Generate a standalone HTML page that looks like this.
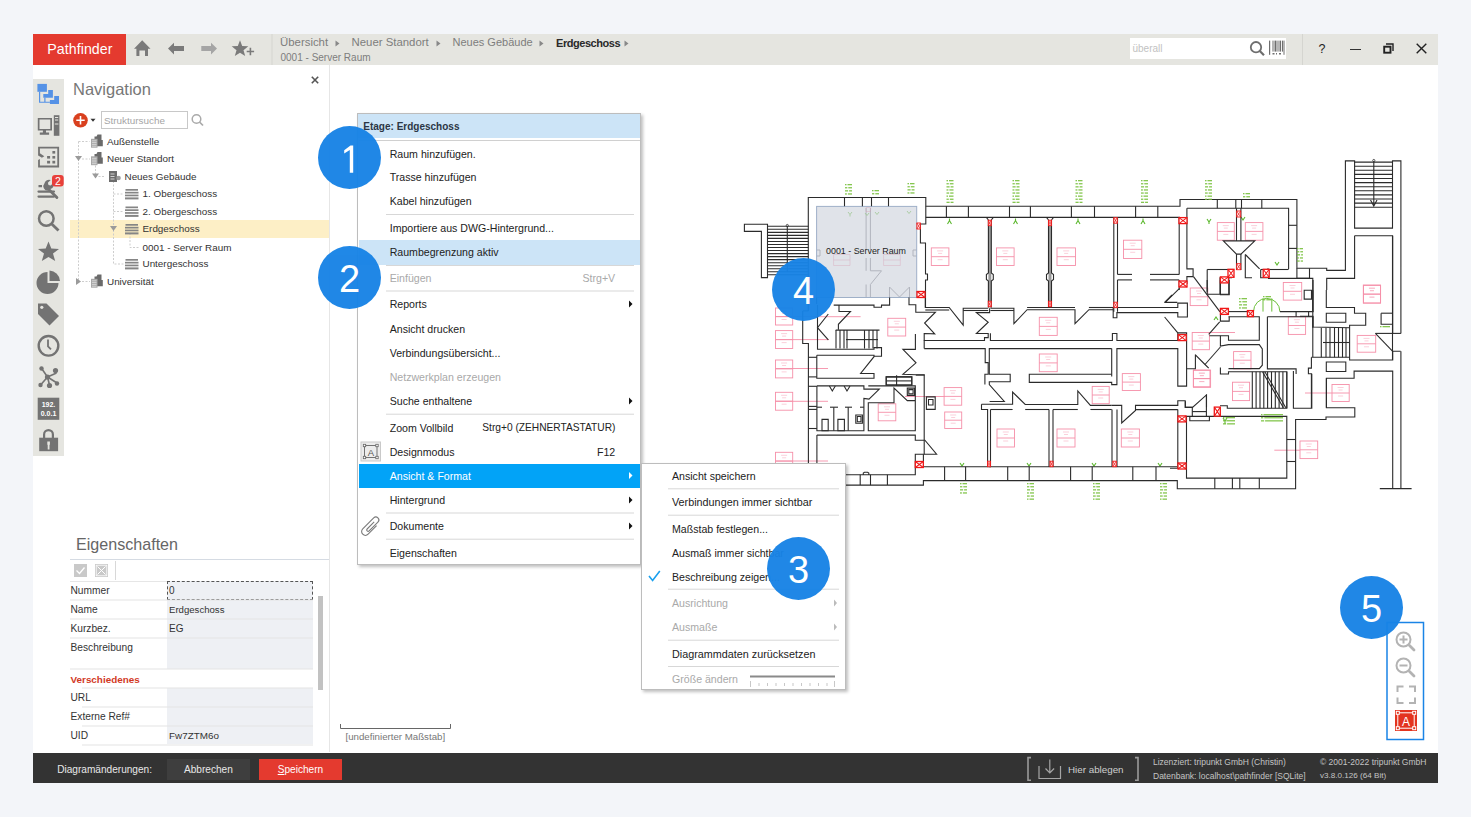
<!DOCTYPE html>
<html><head><meta charset="utf-8">
<style>
*{margin:0;padding:0;box-sizing:border-box}
html,body{width:1471px;height:817px;overflow:hidden;background:#f3f5f9;font-family:"Liberation Sans",sans-serif;color:#222}
.a{position:absolute}
.t{position:absolute;white-space:nowrap;line-height:1}
#app{position:absolute;left:33px;top:34px;width:1405px;height:749px;background:#fff}
#hdr{position:absolute;left:33px;top:34px;width:1405px;height:31px;background:#e5e5e0}
#logo{position:absolute;left:33px;top:34px;width:93px;height:31px;background:#e43a2f;color:#fff;font-size:14.2px;line-height:31px;padding-left:14.3px;letter-spacing:0.05px}
.bc{color:#7d7d7d;font-size:12px}
.menu{position:absolute;background:#fff;border:1px solid #bdbdbd;box-shadow:2px 2px 3px rgba(0,0,0,.25)}
.mi{position:absolute;font-size:11.5px;color:#222;white-space:nowrap;line-height:1}
.dis{color:#a9a9a9}
.sep{position:absolute;height:1px;background:#d7d7d7}
.circ{position:absolute;width:63px;height:63px;border-radius:50%;background:#1783e6;opacity:.96;color:#fff;font-size:38px;line-height:67px;text-align:center}
.prow{position:absolute;left:70px;width:243px;height:19px;border-bottom:1px solid #e3e3e3}
.pl{position:absolute;left:0;top:4px;font-size:10.5px;color:#333;white-space:nowrap}
.pv{position:absolute;left:97px;top:0;width:146px;height:19px;background:#eef0f4}
.pvt{position:absolute;left:2px;top:4px;font-size:10.5px;color:#333;white-space:nowrap}
.tree{position:absolute;font-size:10.5px;color:#333;white-space:nowrap;line-height:1}
</style></head><body>
<div id="app"></div>
<div id="hdr"></div>
<div id="logo">Pathfinder</div>


<!-- header icons -->
<svg class="a" style="left:125px;top:34px" width="150" height="31" viewBox="125 34 150 31">
<g fill="#7a7a7a">
<path d="M142.2 40.3 L150.5 48.8 L148 48.8 L148 56 L145 56 L145 50.5 L139.4 50.5 L139.4 56 L136.4 56 L136.4 48.8 L134 48.8 Z"/>
<path d="M168 48.5 L174 42.7 L174 46 L184 46 L184 51 L174 51 L174 54.4 Z"/>
<path fill="#a5a5a5" d="M217 48.5 L211 42.7 L211 46 L201.3 46 L201.3 51 L211 51 L211 54.4 Z"/>
<path d="M240 40.3 L242.2 46 L248.3 46.3 L243.5 50.2 L245.2 56 L240 52.7 L234.8 56 L236.5 50.2 L231.7 46.3 L237.8 46 Z"/>
<path d="M249.6 47.8 h1.6 v2.9 h2.9 v1.6 h-2.9 v2.9 h-1.6 v-2.9 h-2.9 v-1.6 h2.9 Z"/>
</g>
<rect x="271.5" y="34" width="1" height="31" fill="#d5d5d0"/>
</svg>
<div class="t bc" style="left:280px;top:37px;font-size:11.4px">Übersicht</div>
<div class="t bc" style="left:351.5px;top:37px;font-size:11.4px">Neuer Standort</div>
<div class="t bc" style="left:452.5px;top:37px;font-size:11px">Neues Gebäude</div>
<div class="t" style="left:556px;top:37.5px;font-size:11px;font-weight:bold;color:#2a2a2a;letter-spacing:-0.45px">Erdgeschoss</div>
<svg class="a" style="left:330px;top:38px" width="310" height="12" viewBox="330 38 310 12"><g fill="#888">
<path d="M335.5 40.5 L339.5 43.5 L335.5 46.5Z"/><path d="M436.5 40.5 L440.5 43.5 L436.5 46.5Z"/><path d="M539.5 40.5 L543.5 43.5 L539.5 46.5Z"/><path d="M624.5 40.5 L628.5 43.5 L624.5 46.5Z"/></g></svg>
<div class="t bc" style="left:280.5px;top:52.5px;font-size:10px">0001 - Server Raum</div>
<!-- search -->
<div class="a" style="left:1130px;top:37.5px;width:156px;height:21.5px;background:#fff"></div>
<div class="t" style="left:1132.5px;top:44px;font-size:10px;color:#c2c2c2">überall</div>
<svg class="a" style="left:1240px;top:36px" width="60" height="26" viewBox="1240 36 60 26">
<circle cx="1256" cy="47.2" r="5.2" fill="none" stroke="#6e6e6e" stroke-width="1.8"/>
<path d="M1259.8 51 L1264 55.3" stroke="#6e6e6e" stroke-width="2.2"/>
<g fill="#6e6e6e"><rect x="1269" y="40.6" width="1.2" height="14.2"/><rect x="1272.5" y="40.6" width="1" height="11"/><rect x="1274.5" y="40.6" width="2" height="11"/><rect x="1277.5" y="40.6" width="1" height="11"/><rect x="1279.5" y="40.6" width="1.6" height="11"/><rect x="1282" y="40.6" width="1" height="11"/><rect x="1283.5" y="40.6" width="1" height="14.2"/><rect x="1272.5" y="53" width="2" height="1.5"/><rect x="1276" y="53" width="1" height="1.5"/><rect x="1279" y="53" width="2" height="1.5"/></g>
</svg>
<div class="a" style="left:1302px;top:34px;width:1px;height:31px;background:#d5d5d0"></div>
<div class="t" style="left:1318.5px;top:43px;font-size:12.5px;color:#222">?</div>
<div class="a" style="left:1350px;top:48.5px;width:11px;height:1.3px;background:#333"></div>
<svg class="a" style="left:1383px;top:43px" width="11" height="11" viewBox="0 0 11 11"><path d="M3 1h7v7" fill="none" stroke="#222" stroke-width="1.4"/><rect x="1.2" y="3.7" width="6.3" height="6" fill="none" stroke="#222" stroke-width="1.9"/></svg>
<svg class="a" style="left:1416px;top:43px" width="11" height="11" viewBox="0 0 11 11"><path d="M0.7 0.7L10.3 10.3M10.3 0.7L0.7 10.3" stroke="#222" stroke-width="1.4"/></svg>


<!-- sidebar -->
<div class="a" style="left:33px;top:79px;width:31px;height:377px;background:#e5e5e0"></div>
<svg class="a" style="left:33px;top:79px" width="31" height="377" viewBox="33 79 31 377">
<g fill="#5592e6"><rect x="37.4" y="83.9" width="9.5" height="7.9"/><path d="M48.2 89.9h4.7v7.9h-9.6v-3.8h4.9z"/><path d="M54.2 95.9h4.8v8.1h-9.1v-4h4.3z"/><path d="M39 91.8h1.2v10h9.7v1h-10.9z"/><rect x="44.3" y="97.8" width="1.2" height="4.2"/></g>
<g fill="#737373">
<path d="M37.8 117.9h14.2v12.7h-6v2h3.1v2.2h-9.3v-2.2h3.1v-2h-5.1z M39.5 119.6v9.3h10.8v-9.3z"/>
<path d="M53.8 115.2h5.6v20.6h-5.6z" /><rect x="55" y="117" width="3.2" height="1" fill="#e5e5e0"/><rect x="55" y="119.5" width="3.2" height="1" fill="#e5e5e0"/><rect x="54.8" y="123.5" width="3.6" height="1" fill="#e5e5e0"/>
<path d="M38.1 146.8h21v20.6h-21v-7.5l4-2.2-4-2.2z M39.9 148.6v4.7l4.4 2.9-4.4 2.9v6.5h17.4v-17z"/>
<rect x="52.4" y="151" width="2.8" height="2.6"/><rect x="47.1" y="156" width="3" height="2.6"/><rect x="52.4" y="156" width="2.8" height="2.6"/><rect x="47.1" y="160.8" width="3" height="2.7"/><rect x="52.4" y="160.8" width="2.8" height="2.7"/>
<path d="M38.5 190.5h15.5a1 1 0 0 1 0 2.2h-15.5a1 1 0 0 1 0-2.2z M38.5 195.5h15.5a1 1 0 0 1 0 2.2h-15.5a1 1 0 0 1 0-2.2z M38.5 185h3.5v2.2h-3.5z"/><path d="M44.5 183.2 a4.6 4.6 0 0 1 6.2 -3.2 l-2.8 2.8 0.6 2.2 2.2 0.6 2.8 -2.8 a4.6 4.6 0 0 1 -3.2 6.2 l7.6 7.6 a1.4 1.4 0 0 1 -2 2 l-7.8 -7.8 a4.6 4.6 0 0 1 -3.6 -7.6z"/>
<circle cx="46.3" cy="218.5" r="7.3" fill="none" stroke="#737373" stroke-width="2.5"/><path d="M51.5 223.7 L58.5 230.5" stroke="#737373" stroke-width="2.8"/>
<path d="M48.5 241.6 L51.3 248.6 L59 248.9 L53 253.6 L55.2 261 L48.5 257 L41.8 261 L44 253.6 L38 248.9 L45.7 248.6Z"/>
<path d="M47.5 272 v11 h11 a11 11 0 1 1 -11 -11z"/><path d="M49.5 270.5 a11 11 0 0 1 10.5 10.5 h-10.5z"/>
<path d="M38 303.6 h8.5 l12.5 12.5 -9.5 9.5 -11.5 -11.5z"/><circle cx="41.8" cy="307.3" r="1.6" fill="#e5e5e0"/>
<circle cx="48.5" cy="345.8" r="9.8" fill="none" stroke="#737373" stroke-width="2.4"/><path d="M48 339.5v6.8l3 3" fill="none" stroke="#737373" stroke-width="1.8"/>
<g stroke="#737373" stroke-width="1.6"><path d="M47.5 377 L41 384.5 M47.5 377 L56.5 373 M47.5 377 L49.5 385 M47.5 377 L42 369 M47.5 377 L57 383"/></g>
<circle cx="47.5" cy="377" r="2.6"/><circle cx="41.5" cy="368.5" r="2.2"/><circle cx="55.5" cy="370.5" r="2.6"/><circle cx="57" cy="383.5" r="2.2"/><circle cx="49.5" cy="385.5" r="2.6"/><circle cx="40.5" cy="385" r="2.2"/>
<rect x="37.7" y="397.7" width="21.6" height="22.1"/>
<path d="M43 438 v-3.5 a5.5 5.5 0 0 1 11 0 v3.5 h-2.2 v-3.5 a3.3 3.3 0 0 0 -6.6 0 v3.5z"/><rect x="39.2" y="437.7" width="18.9" height="13.5"/>
</g>
<text x="48.5" y="407" font-family="Liberation Sans" font-size="7" font-weight="bold" fill="#fff" text-anchor="middle">192.</text>
<text x="48.5" y="416" font-family="Liberation Sans" font-size="7" font-weight="bold" fill="#fff" text-anchor="middle">0.0.1</text>
<path d="M47.3 441.5h2.6v3l-0.4 0.5v4.5h-1.8v-4.5l-0.4-0.5z" fill="#e5e5e0"/>
<rect x="52" y="175" width="11.7" height="11.6" rx="3" fill="#e8403a"/><text x="57.9" y="184.6" font-family="Liberation Sans" font-size="10.5" fill="#fff" text-anchor="middle">2</text>
</svg>
<!-- navigation -->
<div class="t" style="left:73px;top:81px;font-size:16.5px;color:#777">Navigation</div>
<svg class="a" style="left:310px;top:75px" width="10" height="10" viewBox="0 0 10 10"><path d="M1.8 1.8L8.2 8.2M8.2 1.8L1.8 8.2" stroke="#555" stroke-width="1.6"/></svg>
<div class="a" style="left:329px;top:65px;width:1px;height:687px;background:#e6e6e6"></div>
<svg class="a" style="left:70px;top:110px" width="140" height="22" viewBox="70 110 140 22">
<circle cx="80.5" cy="120.3" r="7.3" fill="#d9401f"/><path d="M76.3 120.3h8.4M80.5 116.1v8.4" stroke="#fff" stroke-width="1.6"/>
<path d="M90.5 118.8h5l-2.5 3z" fill="#333"/>
<circle cx="196.5" cy="119" r="4.3" fill="none" stroke="#aaa" stroke-width="1.5"/><path d="M199.5 122l3.5 3.5" stroke="#aaa" stroke-width="1.7"/>
</svg>
<div class="a" style="left:101px;top:111px;width:86.5px;height:18px;border:1px solid #c8c8c8;background:#fff"></div>
<div class="t" style="left:104px;top:115.5px;font-size:9.9px;color:#a5a5a5">Struktursuche</div>
<div class="a" style="left:70px;top:220px;width:259px;height:17.5px;background:#fdefc6"></div>
<svg class="a" style="left:70px;top:130px" width="180" height="160" viewBox="70 130 180 160">
<g stroke="#cdcdcd" stroke-width="1" stroke-dasharray="2,1.5" fill="none">
<path d="M78.5 141.5h11 M78.5 141.5v140 M82 159h8 M95.5 162v14.5h10 M113.5 181v83h10 M113.5 194h10 M113.5 211.5h10 M130 233v14.5h10 M82 281.5h8"/>
</g>
<g fill="#9a9a9a"><path d="M75 156h7l-3.5 5z"/><path d="M92 173.5h7l-3.5 5z"/><path d="M110 226h7l-3.5 5z"/><path d="M76 278l5 3.5-5 3.5z"/></g>
<g fill="#6d6d6d">
<g id="bld"><path d="M94.5 136.5h2l1-2h4v5.5h1.3v6.2h-8.3z" fill="#6a6a6a"/><rect x="91" y="138.8" width="6.5" height="8.9" fill="#a8a8a8"/><path d="M92 140.8h4.5M92 142.6h4.5M92 144.4h4.5M92 146.2h4.5" stroke="#e8e8e8" stroke-width=".7"/></g>
<use href="#bld" y="17.5"/><use href="#bld" y="140"/>
<rect x="109" y="171" width="8" height="11"/><circle cx="118.5" cy="178" r="2.3" fill="#9a9a9a"/><path d="M110.5 174h4M110.5 176.5h4M110.5 179h4" stroke="#fff" stroke-width=".7"/>
<g id="flr" fill="#858585"><rect x="125.5" y="189" width="12.5" height="1.7"/><rect x="125" y="191.8" width="13.5" height="1.7"/><rect x="125" y="194.6" width="13.5" height="1.7"/><rect x="125" y="197.4" width="13.5" height="2"/></g>
<use href="#flr" y="17.5"/><use href="#flr" y="35"/><use href="#flr" y="70"/>
</g>
</svg>
<div class="tree" style="left:107px;top:136.5px;font-size:9.9px">Außenstelle</div>
<div class="tree" style="left:107px;top:154px;font-size:9.9px">Neuer Standort</div>
<div class="tree" style="left:124.5px;top:171.5px;font-size:9.9px">Neues Gebäude</div>
<div class="tree" style="left:142.5px;top:189px;font-size:9.9px">1. Obergeschoss</div>
<div class="tree" style="left:142.5px;top:206.5px;font-size:9.9px">2. Obergeschoss</div>
<div class="tree" style="left:142.5px;top:224px;font-size:9.9px">Erdgeschoss</div>
<div class="tree" style="left:142.5px;top:243px;font-size:9.9px">0001 - Server Raum</div>
<div class="tree" style="left:142.5px;top:259px;font-size:9.9px">Untergeschoss</div>
<div class="tree" style="left:107px;top:276.5px;font-size:9.9px">Universität</div>


<!-- properties -->
<div class="t" style="left:76px;top:535.5px;font-size:16.1px;color:#666">Eigenschaften</div>
<div class="a" style="left:70px;top:558.5px;width:259px;height:1px;background:#d5dbe3"></div>
<svg class="a" style="left:70px;top:560px" width="50" height="20" viewBox="70 560 50 20">
<rect x="74" y="564" width="13" height="13" fill="#c9c9c9"/><path d="M76.5 570.5l3 3 5-6" fill="none" stroke="#fff" stroke-width="1.3"/>
<rect x="95" y="564" width="13" height="13" fill="#c9c9c9"/><rect x="96.2" y="565.2" width="10.6" height="10.6" fill="none" stroke="#fff" stroke-width=".8"/><path d="M97.5 566.5l8 8M105.5 566.5l-8 8" stroke="#fff" stroke-width="1"/>
<rect x="115" y="561" width="1" height="19" fill="#d8d8d8"/>
</svg>
<div class="a" style="left:70px;top:580.5px;width:243px;height:1px;background:#e6e6e6"></div>
<div class="a" style="left:167px;top:581px;width:146px;height:163px;background:#eef0f4"></div>
<div class="a" style="left:167px;top:669px;width:146px;height:19px;background:#fff"></div>
<div class="a" style="left:167px;top:581px;width:146px;height:19px;border:1px dashed #555;background:#eef0f4"></div>
<svg class="a" style="left:70px;top:580px" width="250" height="170" viewBox="70 580 250 170">
<g fill="#e3e3e3"><rect x="70" y="599.5" width="243" height="1"/><rect x="70" y="618.5" width="243" height="1"/><rect x="70" y="637.5" width="243" height="1"/><rect x="70" y="668.5" width="243" height="1"/><rect x="82" y="687.5" width="231" height="1"/><rect x="82" y="706.5" width="231" height="1"/><rect x="82" y="725.5" width="231" height="1"/><rect x="82" y="744.5" width="231" height="1"/></g>
</svg>
<div class="a" style="left:318px;top:596px;width:5px;height:94px;background:#c2c2c2"></div>
<div class="tree" style="left:70.5px;top:585.5px;font-size:10.2px">Nummer</div>
<div class="tree" style="left:169px;top:585.5px;font-size:10px">0</div>
<div class="tree" style="left:70.5px;top:604.5px;font-size:10.2px">Name</div>
<div class="tree" style="left:169px;top:604.5px;font-size:9.6px">Erdgeschoss</div>
<div class="tree" style="left:70.5px;top:623.5px;font-size:10.2px">Kurzbez.</div>
<div class="tree" style="left:169px;top:623.5px;font-size:10px">EG</div>
<div class="tree" style="left:70.5px;top:642.5px;font-size:10.2px">Beschreibung</div>
<div class="tree" style="left:70.5px;top:675px;font-size:9.9px;font-weight:bold;color:#d2391f">Verschiedenes</div>
<div class="tree" style="left:70.5px;top:693px;font-size:10.2px">URL</div>
<div class="tree" style="left:70.5px;top:712px;font-size:10.2px">Externe Ref#</div>
<div class="tree" style="left:70.5px;top:731px;font-size:10.2px">UID</div>
<div class="tree" style="left:169px;top:731px;font-size:9.9px">Fw7ZTM6o</div>
<!-- scale -->
<svg class="a" style="left:338px;top:722px" width="116" height="10" viewBox="338 722 116 10"><path d="M340.5 724v4.5h110v-4.5" fill="none" stroke="#666" stroke-width="1"/></svg>
<div class="t" style="left:345.5px;top:732px;font-size:9.7px;color:#777">[undefinierter Maßstab]</div>


<!-- FLOOR -->
<svg class="a" style="left:0;top:0" width="1471" height="817" viewBox="0 0 1471 817">
<g fill="none" stroke="#bfbfc4" stroke-width="1"><path d="M866.1 208.0 L866.1 250.0"/><path d="M870.4 208.0 L870.4 250.0"/><path d="M866.1 258.0 L866.1 270.8"/><path d="M870.4 258.0 L870.4 270.8 L881.5 270.8 L870.4 284.5"/><path d="M866.1 284.5 L866.1 297.0"/><path d="M870.4 284.5 L870.4 297.0"/><path d="M889.5 297.0 L889.5 287.0 L899.5 297.0 L909.5 287.0 L909.5 297.0"/><path d="M816.6 250.0 L820.0 250.0 L820.0 256.0 L816.6 256.0"/><path d="M916.7 250.0 L913.0 250.0 L913.0 256.0 L916.7 256.0"/></g>
<g fill="#f7c9d3" fill-opacity="0"><g fill="none" stroke="#f58fa8" stroke-width="0.9"><rect x="931.3" y="247.9" width="17.600000000000023" height="17.599999999999994"/><path d="M931.3 256.7H948.9"/><path d="M937.1 250.9h6M938.1 253.4h4M937.6 259.7h5" stroke-width="0.7" stroke-opacity="0.6"/><rect x="996.5" y="247.9" width="17.600000000000023" height="17.599999999999994"/><path d="M996.5 256.7H1014.1"/><path d="M1002.3 250.9h6M1003.3 253.4h4M1002.8 259.7h5" stroke-width="0.7" stroke-opacity="0.6"/><rect x="1057" y="247.9" width="18.5" height="17.599999999999994"/><path d="M1057 256.7H1075.5"/><path d="M1063.2 250.9h6M1064.2 253.4h4M1063.8 259.7h5" stroke-width="0.7" stroke-opacity="0.6"/><rect x="1123.5" y="240.2" width="18.299999999999955" height="18.30000000000001"/><path d="M1123.5 249.3H1141.8"/><path d="M1129.7 243.2h6M1130.7 245.7h4M1130.2 252.3h5" stroke-width="0.7" stroke-opacity="0.6"/><rect x="1217.3" y="222.6" width="17.0" height="17.599999999999994"/><path d="M1217.3 231.4H1234.3"/><path d="M1222.8 225.6h6M1223.8 228.1h4M1223.3 234.4h5" stroke-width="0.7" stroke-opacity="0.6"/><rect x="1245.3" y="222.6" width="17.600000000000136" height="17.599999999999994"/><path d="M1245.3 231.4H1262.9"/><path d="M1251.1 225.6h6M1252.1 228.1h4M1251.6 234.4h5" stroke-width="0.7" stroke-opacity="0.6"/><rect x="1190.2" y="288" width="17.59999999999991" height="17.600000000000023"/><path d="M1190.2 296.8H1207.8"/><path d="M1196.0 291.0h6M1197.0 293.5h4M1196.5 299.8h5" stroke-width="0.7" stroke-opacity="0.6"/><rect x="1363.5" y="285.4" width="17.09999999999991" height="17.600000000000023"/><path d="M1363.5 294.2H1380.6"/><path d="M1369.0 288.4h6M1370.0 290.9h4M1369.5 297.2h5" stroke-width="0.7" stroke-opacity="0.6"/><rect x="887.8" y="318.3" width="17.90000000000009" height="17.69999999999999"/><path d="M887.8 327.1H905.7"/><path d="M893.8 321.3h6M894.8 323.8h4M894.2 330.1h5" stroke-width="0.7" stroke-opacity="0.6"/><rect x="944.1" y="387.6" width="17.600000000000023" height="17.599999999999966"/><path d="M944.1 396.4H961.7"/><path d="M949.9 390.6h6M950.9 393.1h4M950.4 399.4h5" stroke-width="0.7" stroke-opacity="0.6"/><rect x="944.7" y="412" width="17.0" height="16.5"/><path d="M944.7 420.2H961.7"/><path d="M950.2 415.0h6M951.2 417.5h4M950.7 423.2h5" stroke-width="0.7" stroke-opacity="0.6"/><rect x="1039.3" y="317.3" width="17.90000000000009" height="18.099999999999966"/><path d="M1039.3 326.4H1057.2"/><path d="M1045.2 320.3h6M1046.2 322.8h4M1045.8 329.4h5" stroke-width="0.7" stroke-opacity="0.6"/><rect x="1039.3" y="354" width="17.90000000000009" height="17.69999999999999"/><path d="M1039.3 362.9H1057.2"/><path d="M1045.2 357.0h6M1046.2 359.5h4M1045.8 365.9h5" stroke-width="0.7" stroke-opacity="0.6"/><rect x="1092.2" y="386.4" width="17.0" height="17.30000000000001"/><path d="M1092.2 395.0H1109.2"/><path d="M1097.7 389.4h6M1098.7 391.9h4M1098.2 398.0h5" stroke-width="0.7" stroke-opacity="0.6"/><rect x="1122.3" y="373.6" width="18.100000000000136" height="16.899999999999977"/><path d="M1122.3 382.1H1140.4"/><path d="M1128.3 376.6h6M1129.3 379.1h4M1128.8 385.1h5" stroke-width="0.7" stroke-opacity="0.6"/><rect x="1192.2" y="332.5" width="17.200000000000045" height="17.19999999999999"/><path d="M1192.2 341.1H1209.4"/><path d="M1197.8 335.5h6M1198.8 338.0h4M1198.3 344.1h5" stroke-width="0.7" stroke-opacity="0.6"/><rect x="1193.3" y="370.2" width="16.700000000000045" height="16.600000000000023"/><path d="M1193.3 378.5H1210"/><path d="M1198.7 373.2h6M1199.7 375.7h4M1199.2 381.5h5" stroke-width="0.7" stroke-opacity="0.6"/><rect x="1121.3" y="429" width="18.100000000000136" height="18"/><path d="M1121.3 438.0H1139.4"/><path d="M1127.3 432.0h6M1128.3 434.5h4M1127.8 441.0h5" stroke-width="0.7" stroke-opacity="0.6"/><rect x="997" y="429" width="17.5" height="18"/><path d="M997 438.0H1014.5"/><path d="M1002.8 432.0h6M1003.8 434.5h4M1003.2 441.0h5" stroke-width="0.7" stroke-opacity="0.6"/><rect x="1057" y="429" width="18" height="18"/><path d="M1057 438.0H1075"/><path d="M1063.0 432.0h6M1064.0 434.5h4M1063.5 441.0h5" stroke-width="0.7" stroke-opacity="0.6"/><rect x="878.2" y="403.8" width="17.59999999999991" height="17.0"/><path d="M878.2 412.3H895.8"/><path d="M884.0 406.8h6M885.0 409.3h4M884.5 415.3h5" stroke-width="0.7" stroke-opacity="0.6"/><rect x="1283.3" y="282.5" width="18.40000000000009" height="17.600000000000023"/><path d="M1283.3 291.3H1301.7"/><path d="M1289.5 285.5h6M1290.5 288.0h4M1290.0 294.3h5" stroke-width="0.7" stroke-opacity="0.6"/><rect x="1288.3" y="316.7" width="17.299999999999955" height="17.69999999999999"/><path d="M1288.3 325.5H1305.6"/><path d="M1293.9 319.7h6M1294.9 322.2h4M1294.4 328.5h5" stroke-width="0.7" stroke-opacity="0.6"/><rect x="1233.6" y="351.6" width="17.40000000000009" height="17.299999999999955"/><path d="M1233.6 360.2H1251"/><path d="M1239.3 354.6h6M1240.3 357.1h4M1239.8 363.2h5" stroke-width="0.7" stroke-opacity="0.6"/><rect x="1193.5" y="370.1" width="17.09999999999991" height="17.19999999999999"/><path d="M1193.5 378.7H1210.6"/><path d="M1199.0 373.1h6M1200.0 375.6h4M1199.5 381.7h5" stroke-width="0.7" stroke-opacity="0.6"/><rect x="1232.5" y="382.2" width="17.09999999999991" height="18.400000000000034"/><path d="M1232.5 391.4H1249.6"/><path d="M1238.0 385.2h6M1239.0 387.7h4M1238.5 394.4h5" stroke-width="0.7" stroke-opacity="0.6"/><rect x="1300" y="441" width="17.700000000000045" height="17.600000000000023"/><path d="M1300 449.8H1317.7"/><path d="M1305.8 444.0h6M1306.8 446.5h4M1306.3 452.8h5" stroke-width="0.7" stroke-opacity="0.6"/><rect x="1357.2" y="335.4" width="18.5" height="16.80000000000001"/><path d="M1357.2 343.8H1375.7"/><path d="M1363.5 338.4h6M1364.5 340.9h4M1364.0 346.8h5" stroke-width="0.7" stroke-opacity="0.6"/><rect x="1332" y="384.5" width="17.200000000000045" height="17.0"/><path d="M1332 393.0H1349.2"/><path d="M1337.6 387.5h6M1338.6 390.0h4M1338.1 396.0h5" stroke-width="0.7" stroke-opacity="0.6"/><rect x="1363.3" y="285" width="17.200000000000045" height="18.100000000000023"/><path d="M1363.3 294.1H1380.5"/><path d="M1368.9 288.0h6M1369.9 290.5h4M1369.4 297.1h5" stroke-width="0.7" stroke-opacity="0.6"/><rect x="775.5" y="308" width="17.200000000000045" height="17"/><path d="M775.5 316.5H792.7"/><path d="M781.1 311.0h6M782.1 313.5h4M781.6 319.5h5" stroke-width="0.7" stroke-opacity="0.6"/><rect x="775.5" y="330.6" width="17.200000000000045" height="17.899999999999977"/><path d="M775.5 339.6H792.7"/><path d="M781.1 333.6h6M782.1 336.1h4M781.6 342.6h5" stroke-width="0.7" stroke-opacity="0.6"/><rect x="775.5" y="360" width="17.200000000000045" height="17.899999999999977"/><path d="M775.5 368.9H792.7"/><path d="M781.1 363.0h6M782.1 365.5h4M781.6 371.9h5" stroke-width="0.7" stroke-opacity="0.6"/><rect x="775.5" y="392.3" width="17.200000000000045" height="17.899999999999977"/><path d="M775.5 401.2H792.7"/><path d="M781.1 395.3h6M782.1 397.8h4M781.6 404.2h5" stroke-width="0.7" stroke-opacity="0.6"/><rect x="775.5" y="452.3" width="17.200000000000045" height="17.69999999999999"/><path d="M775.5 461.1H792.7"/><path d="M781.1 455.3h6M782.1 457.8h4M781.6 464.1h5" stroke-width="0.7" stroke-opacity="0.6"/><path d="M775.5 316.7H860.6"/><path d="M775.5 339.6H829"/><path d="M775.5 368.5H828"/><path d="M775.5 401.3H828"/><path d="M775.5 461H828"/><path d="M905 396.5H944.7"/><path d="M1274.3 450.2H1300"/><path d="M1305 393H1332"/><path d="M1209.4 332.5H1235"/></g></g>
<rect x="988.4" y="220" width="2.9" height="87.4" fill="#9a9a9a"/><rect x="1048.5" y="220" width="3" height="87.4" fill="#9a9a9a"/><g fill="none" stroke="#f3a0b4" stroke-width="0.8" stroke-opacity="0.45"><path d="M833.6 254.5h16.4v11h-16.4zM833.6 260h16.4M883.6 254.5h16.7v11h-16.7zM883.6 260h16.7M866 207.5h4.5v4h-4.5z"/></g><g fill="none" stroke="#a6d98a" stroke-width="0.8"><path d="M848 212l2 2.5 2-2.5M850 214.5v2M865 213l2 2.5 2-2.5M875 212l2 2.5 2-2.5M907 211l2 2.5 2-2.5"/></g><g fill="none" stroke="#5cb82e" stroke-width="1.1"><path d="M947.5 224l2-3.5 2 3.5M949.5 220.5v-2"/><path d="M1013.5 224l2-3.5 2 3.5M1015.5 220.5v-2"/><path d="M1076 224l2-3.5 2 3.5M1078 220.5v-2"/><path d="M1141 224l2-3.5 2 3.5M1143 220.5v-2"/><path d="M1207 219l2 3 2-3M1209 222v2"/><path d="M1241 217l2 3 2-3"/><path d="M1275 262l2 3 2-3"/><path d="M1214 320l2 -3 2 3"/><path d="M960 463l2 3 2-3"/><path d="M1027 463l2 3 2-3"/><path d="M1092 463l2 3 2-3"/><path d="M1158 463l2 3 2-3"/><path d="M1223 418l2 3 2-3M1225 421v3"/></g><rect x="816.6" y="206.4" width="100.1" height="91.1" fill="#8e9bb0" fill-opacity="0.28" stroke="#9fb0c8" stroke-width="1"/><text x="866" y="254.3" font-family="Liberation Sans" font-size="8.9" fill="#1e1e1e" text-anchor="middle">0001 - Server Raum</text><path d="M1253.5 311.6 a13.2 13.2 0 0 1 26.4 0 M1263 298.5 V311.6 M1271.8 298.5 V311.6" fill="none" stroke="#6cbf3a" stroke-width="1"/><circle cx="1373.8" cy="160.5" r="1.1" fill="#fff" stroke="#333" stroke-width="0.8"/><circle cx="787.3" cy="225.5" r="1.1" fill="#fff" stroke="#333" stroke-width="0.8"/>
<g fill="none" stroke="#2b2b2b" stroke-width="1.1" stroke-linejoin="miter"><path d="M744.4 224.3 L767.5 224.3 L767.5 277.6 L761.4 277.6 L761.4 231.4 L744.4 231.4Z"/><path d="M767.5 226.3 L808.3 226.3"/><path d="M767.5 229.3 L808.3 229.3"/><path d="M767.5 232.4 L808.3 232.4"/><path d="M767.5 235.4 L808.3 235.4"/><path d="M767.5 238.4 L808.3 238.4"/><path d="M767.5 241.5 L808.3 241.5"/><path d="M767.5 244.5 L808.3 244.5"/><path d="M767.5 247.5 L808.3 247.5"/><path d="M767.5 250.5 L808.3 250.5"/><path d="M767.5 253.6 L808.3 253.6"/><path d="M767.5 256.6 L808.3 256.6"/><path d="M767.5 259.6 L808.3 259.6"/><path d="M767.5 262.7 L808.3 262.7"/><path d="M767.5 265.7 L808.3 265.7"/><path d="M767.5 268.7 L808.3 268.7"/><path d="M767.5 271.8 L808.3 271.8"/><path d="M767.5 274.8 L808.3 274.8"/><path d="M787.3 226.3 L787.3 272.0"/><path d="M808.3 277.6 L808.3 197.5 L925.8 197.5 L925.8 206.2 L1180.0 206.2 L1180.0 199.5 L1296.9 199.5 L1296.9 268.2 L1326.7 268.2 L1326.7 270.4 L1345.4 270.4 L1345.4 160.9 L1354.6 160.9 L1354.6 228.1 L1392.5 228.1 L1392.5 160.9 L1400.9 160.9 L1400.9 333.4"/><path d="M1400.9 351.3 L1400.9 488.6"/><path d="M1379.8 488.6 L1411.6 488.6"/><path d="M1354.6 162.1 L1392.5 162.1"/><path d="M1354.6 166.2 L1392.5 166.2"/><path d="M1354.6 170.3 L1392.5 170.3"/><path d="M1354.6 174.4 L1392.5 174.4"/><path d="M1354.6 178.5 L1392.5 178.5"/><path d="M1354.6 182.6 L1392.5 182.6"/><path d="M1354.6 186.7 L1392.5 186.7"/><path d="M1354.6 190.8 L1392.5 190.8"/><path d="M1354.6 194.9 L1392.5 194.9"/><path d="M1354.6 199.0 L1392.5 199.0"/><path d="M1354.6 203.1 L1392.5 203.1"/><path d="M1354.6 207.2 L1392.5 207.2"/><path d="M1373.8 161.5 L1373.8 205.0"/><path d="M1370.5 200.0 L1373.8 206.0 L1377.0 200.0"/><path d="M1354.6 235.8 L1392.5 235.8 L1392.5 360.0"/><path d="M1354.6 235.8 L1354.6 278.4 L1326.7 278.4 L1326.7 290.0"/><path d="M925.8 217.4 L1180.0 217.4"/><path d="M925.8 206.2 L925.8 224.0 L920.4 224.0 L920.4 243.0 L925.5 243.0 L925.5 274.0 L927.5 274.0 L927.5 280.0 L925.5 280.0 L925.5 307.4"/><path d="M988.4 220.0 L988.4 273.0 L986.4 274.5 L986.4 279.5 L988.4 281.0 L988.4 307.4"/><path d="M991.3 220.0 L991.3 273.0 L993.3 274.5 L993.3 279.5 L991.3 281.0 L991.3 307.4"/><path d="M988.4 220.0 L986.4 217.4"/><path d="M991.3 220.0 L993.3 217.4"/><path d="M1048.5 220.0 L1048.5 273.0 L1046.5 274.5 L1046.5 279.5 L1048.5 281.0 L1048.5 307.4"/><path d="M1051.5 220.0 L1051.5 273.0 L1053.5 274.5 L1053.5 279.5 L1051.5 281.0 L1051.5 307.4"/><path d="M1048.5 220.0 L1046.5 217.4"/><path d="M1051.5 220.0 L1053.5 217.4"/><path d="M1113.8 217.4 L1113.8 311.8"/><path d="M1117.5 217.4 L1117.5 274.4"/><path d="M1117.5 279.9 L1117.5 311.8"/><path d="M1179.2 217.4 L1179.2 274.4"/><path d="M1186.9 208.3 L1186.9 268.9 L1193.1 268.9 L1193.1 276.6 L1186.9 276.6 L1186.9 284.0"/><path d="M1117.5 274.4 L1132.0 274.4"/><path d="M1150.0 274.4 L1179.2 274.4"/><path d="M1117.5 279.9 L1132.0 279.9"/><path d="M1150.0 279.9 L1179.2 279.9"/><path d="M1179.2 279.9 L1179.2 290.0"/><path d="M1186.9 208.3 L1288.6 208.3 L1288.6 268.9"/><path d="M1236.5 208.3 L1236.5 240.9"/><path d="M1240.9 208.3 L1240.9 240.9"/><path d="M1223.3 240.9 L1254.8 240.9 L1240.9 254.1 L1236.5 254.1Z"/><path d="M1236.5 254.1 L1236.5 270.0"/><path d="M1240.9 254.1 L1240.9 270.0"/><path d="M1207.2 269.5 L1207.2 294.2 L1220.0 294.2 L1220.0 277.7 L1232.0 277.7"/><path d="M1207.2 269.5 L1233.0 269.5"/><path d="M1245.3 254.5 L1259.6 268.9"/><path d="M1245.3 254.5 L1245.3 277.7 L1252.0 277.7"/><path d="M1260.7 269.5 L1288.6 269.5"/><path d="M1260.7 269.5 L1260.7 277.7 L1268.0 277.7 L1268.0 268.2"/><path d="M1220.0 294.2 L1228.8 294.2 L1228.8 277.7"/><path d="M1193.5 276.6 L1220.0 311.8"/><path d="M1179.5 288.3 L1165.2 302.4 L1177.3 302.4"/><path d="M1296.9 268.2 L1296.9 278.4 L1309.5 278.4 L1309.5 268.2"/><path d="M1268.0 278.4 L1312.8 278.4 L1312.8 320.0"/><path d="M1312.8 320.0 L1312.8 357.0"/><path d="M808.3 277.6 L808.3 311.0"/><path d="M802.7 310.9 L808.4 310.9"/><path d="M802.7 310.9 L802.7 343.5 L808.4 343.5 L808.4 485.1 L923.4 485.1 L923.4 480.6 L1177.3 480.6 L1177.3 488.7 L1295.6 488.7 L1295.6 419.5 L1326.0 419.5 L1326.0 417.0 L1354.8 417.0 L1354.8 407.8 L1326.4 407.8 L1326.4 378.2 L1354.1 378.2 L1354.1 371.1 L1392.7 371.1 L1392.7 488.6"/><path d="M816.6 297.5 L816.6 304.0"/><path d="M833.7 305.1 L874.0 305.1 L874.0 307.2 L881.5 307.2 L881.5 305.1 L889.6 305.1 L889.6 297.4"/><path d="M909.0 297.4 L909.0 304.8 L915.8 304.8 L915.8 312.2 L935.4 312.2 L924.6 323.0 L934.7 333.8 L924.2 333.5 L924.2 340.5 L984.5 340.5 L984.5 337.6 L988.2 337.6 L988.2 333.5 L976.4 333.5 L988.2 322.2 L976.4 312.6 L989.6 312.6 L989.6 308.2"/><path d="M925.3 297.5 L925.3 307.5 L949.2 307.5 L963.2 325.1 L963.2 308.2 L988.2 308.2"/><path d="M925.3 310.0 L949.2 310.0"/><path d="M963.2 310.5 L988.2 310.5"/><path d="M990.4 308.2 L1013.9 308.2 L1013.9 323.7 L1027.1 309.7 L1075.0 309.7 L1075.0 323.7 L1088.9 309.7 L1113.2 309.7"/><path d="M990.4 310.5 L1013.9 310.5"/><path d="M1027.1 307.5 L1075.0 307.5"/><path d="M1088.9 307.5 L1113.2 307.5"/><path d="M1113.2 307.5 L1177.8 307.5 L1177.8 303.1 L1187.4 303.1 L1187.4 317.0 L1177.8 317.0 L1177.8 312.6 L1116.9 312.6 L1116.9 317.8 L1113.2 317.8 L1113.2 307.5"/><path d="M990.4 333.2 L990.4 340.5 L1112.4 340.5 L1112.4 333.5 L1116.9 333.5 L1116.9 340.5 L1177.8 340.5 L1177.8 332.9 L1186.6 332.9 L1186.6 386.1 L1177.8 386.1 L1177.8 348.6 L1116.9 348.6 L1116.9 384.6 L1111.7 384.6 L1111.7 382.4 L1029.3 382.4 L1029.3 374.3 L1111.7 374.3"/><path d="M1111.7 348.6 L989.3 348.6 L989.3 374.3 L1010.2 374.3 L1010.2 381.7 L989.3 381.7 L989.3 384.6 L1004.3 401.5 L989.6 401.5"/><path d="M1111.7 348.6 L1111.7 376.5"/><path d="M1164.6 302.3 L1172.0 295.0"/><path d="M1164.6 317.0 L1177.8 332.9"/><path d="M924.2 348.6 L985.2 348.6 L985.2 362.6 L988.2 362.6 L988.2 374.3 L984.9 374.3 L984.9 384.6"/><path d="M915.4 333.9 L915.4 349.4 L902.9 349.4 L916.0 362.8 L902.9 374.3 L916.0 374.8 L924.2 374.8 L924.2 440.2"/><path d="M924.2 340.5 L924.2 348.6"/><path d="M839.0 305.1 L839.0 311.5 L850.5 311.5 L838.4 324.3 L838.4 329.7"/><path d="M828.3 314.0 L817.5 327.7 L828.3 339.8"/><path d="M817.5 305.0 L817.5 349.3 L874.0 349.3 L874.0 347.6 L881.5 347.6 L881.5 356.3 L874.0 356.3"/><path d="M835.7 330.1 L879.5 330.1"/><path d="M836.0 330.1 L836.0 348.6"/><path d="M840.0 330.1 L840.0 348.6"/><path d="M844.0 330.1 L844.0 348.6"/><path d="M847.0 330.1 L847.0 348.6"/><path d="M864.5 330.1 L864.5 348.6"/><path d="M869.0 330.1 L869.0 348.6"/><path d="M873.0 330.1 L873.0 348.6"/><path d="M877.0 330.1 L877.0 348.6"/><path d="M846.0 339.6 L878.0 339.6"/><path d="M816.8 355.3 L874.0 355.3 L874.0 356.7 L860.6 373.5 L874.0 373.5 L874.0 378.2 L816.8 378.2 L816.8 355.3"/><path d="M886.2 376.9 L911.8 376.9 L911.8 385.0 L886.2 385.0Z"/><path d="M886.2 380.9 L911.8 380.9"/><path d="M915.8 375.1 L924.6 375.1"/><path d="M816.9 385.9 L863.9 385.9 L863.9 389.1 L879.3 389.1 L869.0 399.1 L863.9 398.4 L863.9 430.7 L816.9 430.7 L816.9 385.9"/><path d="M829.4 386.0 L832.3 391.0 L835.3 386.0"/><path d="M844.1 386.0 L847.0 391.0 L850.0 386.0"/><path d="M816.9 407.2 L822.0 407.2"/><path d="M830.0 407.2 L838.0 407.2"/><path d="M845.0 407.2 L852.0 407.2"/><path d="M860.0 407.2 L863.9 407.2"/><path d="M833.8 407.2 L833.8 430.7"/><path d="M848.2 407.2 L848.2 430.7"/><path d="M822.0 419.4 L828.2 419.4 L828.2 430.7 L822.0 430.7Z"/><path d="M837.9 419.4 L844.4 419.4 L844.4 430.7 L837.9 430.7Z"/><path d="M868.3 385.9 L915.3 385.9 L915.3 430.7 L868.3 430.7 L868.3 402.8 L894.0 402.8 L894.0 388.1 L907.3 400.6 L915.3 400.6"/><path d="M816.9 435.1 L915.3 435.1 L915.3 440.2 L924.9 440.2 L936.6 454.2 L915.3 454.2 L915.3 474.8 L816.9 474.8 L816.9 435.1"/><path d="M923.4 454.2 L923.4 466.7 L1177.3 466.7"/><path d="M924.2 440.2 L924.2 454.2"/><path d="M863.3 475.1 L863.3 473.0 L864.5 472.3 L867.6 472.3 L868.8 473.0 L868.8 475.1"/><path d="M926.4 396.9 L935.2 396.9 L935.2 409.4 L926.4 409.4Z"/><path d="M928.5 399.5 L933.0 399.5 L933.0 405.0 L928.5 405.0Z"/><path d="M855.8 415.0 L862.4 415.0 L862.4 423.3 L855.8 423.3Z"/><path d="M857.3 416.5 L861.0 416.5 L861.0 421.8 L857.3 421.8Z"/><path d="M907.3 388.1 L914.6 388.1 L914.6 395.4 L907.3 395.4Z"/><path d="M908.8 389.6 L913.1 389.6 L913.1 393.9 L908.8 393.9Z"/><path d="M886.2 376.9 L911.8 376.9 L911.8 385.0 L886.2 385.0Z"/><path d="M896.6 375.3 L896.6 385.4"/><path d="M981.5 404.2 L1012.6 404.2 L1012.6 392.0 L1025.2 404.5 L1049.0 404.5"/><path d="M981.5 404.2 L981.5 409.5 L987.6 409.5 L987.6 465.6 L990.5 466.9"/><path d="M990.5 409.5 L1012.6 409.5"/><path d="M1025.2 409.5 L1049.0 409.5"/><path d="M990.5 409.5 L990.5 466.9"/><path d="M1049.0 404.5 L1053.0 404.5 L1077.8 404.5 L1077.8 391.0 L1090.4 405.4 L1111.7 405.4"/><path d="M1053.0 409.5 L1077.8 409.5"/><path d="M1090.4 409.5 L1111.7 409.5"/><path d="M1049.0 409.5 L1049.0 466.9"/><path d="M1053.0 409.5 L1053.0 466.9"/><path d="M1111.7 405.4 L1117.0 405.4 L1121.7 405.4 L1121.7 423.0 L1135.5 410.4 L1135.5 405.4 L1177.8 405.4 L1177.8 400.8 L1185.2 400.8 L1185.2 407.4 L1192.5 407.4 L1206.5 394.9 L1206.5 407.4"/><path d="M1135.5 409.6 L1177.8 409.6"/><path d="M1112.0 409.5 L1112.0 466.9"/><path d="M1117.0 409.5 L1117.0 466.9"/><path d="M1177.8 409.6 L1177.8 468.2 L1170.0 468.2"/><path d="M1186.5 416.4 L1286.8 416.4 L1286.8 478.1 L1186.5 478.1Z"/><path d="M1185.4 401.3 L1185.4 407.2 L1192.3 407.2 L1192.3 416.4"/><path d="M1189.8 416.4 L1189.8 420.8 L1209.4 420.8 L1209.4 416.4"/><path d="M1206.4 394.7 L1206.4 416.4"/><path d="M1192.3 411.6 L1206.4 411.6"/><path d="M1220.0 405.7 L1227.3 405.7 L1227.3 408.2 L1286.8 408.2 L1286.8 371.8 L1228.5 371.8 L1228.5 374.0 L1220.4 374.0 L1220.4 367.4"/><path d="M1252.3 371.8 L1252.3 408.2"/><path d="M1256.1 371.8 L1256.1 408.2"/><path d="M1260.0 371.8 L1260.0 408.2"/><path d="M1263.8 371.8 L1263.8 408.2"/><path d="M1267.6 371.8 L1267.6 408.2"/><path d="M1271.5 371.8 L1271.5 408.2"/><path d="M1275.3 371.8 L1275.3 408.2"/><path d="M1279.1 371.8 L1279.1 408.2"/><path d="M1282.9 371.8 L1282.9 408.2"/><path d="M1286.8 371.8 L1286.8 408.2"/><path d="M1262.6 372.0 L1283.4 407.7"/><path d="M1265.0 372.0 L1285.8 407.7"/><path d="M1293.4 371.0 L1293.4 408.2 L1311.8 408.2 L1311.8 373.8"/><path d="M1207.2 280.0 L1207.2 291.8"/><path d="M1220.4 280.0 L1220.4 294.7 L1229.2 294.7 L1229.2 280.0"/><path d="M1228.5 311.6 L1247.6 311.6"/><path d="M1279.9 311.6 L1313.0 311.6 L1313.0 280.0"/><path d="M1228.5 316.7 L1259.3 316.7 L1259.3 340.2 L1228.5 340.2 L1228.5 335.8 L1209.4 335.8"/><path d="M1267.4 316.7 L1313.0 316.7 L1313.0 327.0 L1349.6 327.7"/><path d="M1267.4 316.7 L1267.4 368.9 L1296.1 368.9 L1296.1 374.0"/><path d="M1220.4 314.5 L1220.4 321.1 L1229.2 321.1 L1229.2 316.7"/><path d="M1219.7 321.9 L1208.7 334.4"/><path d="M1220.4 335.8 L1220.4 346.1 L1228.5 344.6 L1259.3 344.6 L1262.3 349.0 L1262.3 365.2 L1259.3 368.6 L1228.5 368.6"/><path d="M1220.4 347.0 L1205.0 364.5"/><path d="M1195.4 354.9 L1205.0 364.5 L1208.7 368.2"/><path d="M1186.6 368.7 L1195.4 368.7 L1195.4 354.5"/><path d="M1312.8 290.0 L1312.8 311.5 L1300.0 311.5"/><path d="M1300.0 316.3 L1312.8 316.3 L1312.8 327.7"/><path d="M1326.3 290.0 L1326.3 307.5 L1354.5 307.5 L1354.5 313.2 L1365.7 313.2 L1365.7 325.3 L1349.6 325.3 L1349.6 360.0 L1392.7 360.0 L1392.7 351.3 L1400.7 351.3"/><path d="M1392.7 235.8 L1392.7 333.4"/><path d="M1375.4 333.4 L1400.9 333.4"/><path d="M1375.4 333.4 L1392.7 351.3"/><path d="M1381.1 313.2 L1392.7 313.2"/><path d="M1381.1 313.2 L1381.1 324.3 L1392.7 324.3"/><path d="M1326.3 313.2 L1345.8 313.2 L1345.8 322.3 L1326.3 322.3Z"/><path d="M1326.3 362.0 L1345.8 362.0 L1345.8 371.5 L1326.3 371.5Z"/><path d="M1321.3 327.7 L1321.3 357.3"/><path d="M1326.0 327.7 L1326.0 357.3"/><path d="M1330.0 327.7 L1330.0 357.3"/><path d="M1334.5 327.7 L1334.5 357.3"/><path d="M1338.5 327.7 L1338.5 357.3"/><path d="M1342.5 327.7 L1342.5 357.3"/><path d="M1346.0 327.7 L1346.0 357.3"/><path d="M1323.0 342.5 L1349.0 342.5"/><path d="M1311.4 357.3 L1349.6 357.3"/><path d="M1311.4 357.3 L1311.4 368.1 L1308.4 368.1 L1308.4 373.8 L1311.4 373.8 L1311.4 408.0"/><path d="M1326.4 378.2 L1326.4 407.8"/><path d="M1304.2 290.3 L1311.5 290.3 L1311.5 299.1 L1304.2 299.1Z"/><path d="M844.5 197.5L844.5 206.2"/><path d="M862.4 197.5L862.4 206.2"/><path d="M871.5 197.5L871.5 206.2"/><path d="M888.5 197.5L888.5 206.2"/><path d="M946.4 206.2L946.4 217.4"/><path d="M968.4 206.2L968.4 217.4"/><path d="M1009.5 206.2L1009.5 217.4"/><path d="M1030.4 206.2L1030.4 217.4"/><path d="M1071.4 206.2L1071.4 217.4"/><path d="M1094.5 206.2L1094.5 217.4"/><path d="M1135.6 206.2L1135.6 217.4"/><path d="M1157.8 206.2L1157.8 217.4"/><path d="M1217.3 199.5L1217.3 208.3"/><path d="M1235.8 199.5L1235.8 208.3"/><path d="M1241.5 199.5L1241.5 208.3"/><path d="M1261.8 199.5L1261.8 208.3"/><path d="M1288.6 225.3L1296.9 225.3"/><path d="M1288.6 248.4L1296.9 248.4"/><path d="M808.4 357.3L816.9 357.3"/><path d="M808.4 376.9L816.9 376.9"/><path d="M808.4 386.3L816.9 386.3"/><path d="M808.4 406.4L816.9 406.4"/><path d="M808.4 409.4L816.9 409.4"/><path d="M808.4 428.5L816.9 428.5"/><path d="M860.2 474.8L860.2 485.1"/><path d="M870.5 474.8L870.5 485.1"/><path d="M887.4 474.8L887.4 485.1"/><path d="M944.6 466.7L944.6 480.6"/><path d="M965.6 466.7L965.6 480.6"/><path d="M1007.7 466.7L1007.7 480.6"/><path d="M1029.2 466.7L1029.2 480.6"/><path d="M1070.6 466.7L1070.6 480.6"/><path d="M1092.2 466.7L1092.2 480.6"/><path d="M1132.8 466.7L1132.8 480.6"/><path d="M1156 466.7L1156 480.6"/><path d="M1214.8 478.1L1214.8 488.7"/><path d="M1232.4 478.1L1232.4 488.7"/><path d="M1239.8 478.1L1239.8 488.7"/><path d="M1259.3 478.1L1259.3 488.7"/><path d="M1286.8 439.5L1295.6 439.5"/><path d="M1286.8 461.5L1295.6 461.5"/><path d="M1296.1 311.6L1296.1 316.7"/><path d="M1308.6 311.6L1308.6 316.7"/></g>
<g fill="#fff" stroke="#f01818" stroke-width="1.3"><rect x="916.9" y="223.0" width="3.5" height="6" stroke-width="0.9"/><path d="M916.9 223.0L920.4 229.0M920.4 223.0L916.9 229.0" stroke-width="0.72"/><rect x="917.0" y="291.5" width="8" height="6" stroke-width="1.3"/><path d="M917.0 291.5L925.0 297.5M925.0 291.5L917.0 297.5" stroke-width="1.04"/><rect x="988.3" y="220.2" width="3" height="5.5" stroke-width="0.9"/><path d="M988.3 220.2L991.3 225.7M991.3 220.2L988.3 225.7" stroke-width="0.72"/><rect x="988.3" y="301.2" width="3" height="5.5" stroke-width="0.9"/><path d="M988.3 301.2L991.3 306.8M991.3 301.2L988.3 306.8" stroke-width="0.72"/><rect x="1048.5" y="220.2" width="3" height="5.5" stroke-width="0.9"/><path d="M1048.5 220.2L1051.5 225.7M1051.5 220.2L1048.5 225.7" stroke-width="0.72"/><rect x="1048.5" y="301.2" width="3" height="5.5" stroke-width="0.9"/><path d="M1048.5 301.2L1051.5 306.8M1051.5 301.2L1048.5 306.8" stroke-width="0.72"/><rect x="1113.8" y="217.7" width="3.5" height="5.5" stroke-width="0.9"/><path d="M1113.8 217.7L1117.2 223.2M1117.2 217.7L1113.8 223.2" stroke-width="0.72"/><rect x="1113.8" y="302.2" width="3.5" height="5.5" stroke-width="0.9"/><path d="M1113.8 302.2L1117.2 307.8M1117.2 302.2L1113.8 307.8" stroke-width="0.72"/><rect x="1179.0" y="217.6" width="8" height="6" stroke-width="1.3"/><path d="M1179.0 217.6L1187.0 223.6M1187.0 217.6L1179.0 223.6" stroke-width="1.04"/><rect x="1179.0" y="281.0" width="8" height="6" stroke-width="1.3"/><path d="M1179.0 281.0L1187.0 287.0M1187.0 281.0L1179.0 287.0" stroke-width="1.04"/><rect x="1236.7" y="211.0" width="4" height="6" stroke-width="0.9"/><path d="M1236.7 211.0L1240.7 217.0M1240.7 211.0L1236.7 217.0" stroke-width="0.72"/><rect x="1228.0" y="269.3" width="6" height="8" stroke-width="1.3"/><path d="M1228.0 269.3L1234.0 277.3M1234.0 269.3L1228.0 277.3" stroke-width="1.04"/><rect x="1220.4" y="276.9" width="8" height="6" stroke-width="1.3"/><path d="M1220.4 276.9L1228.4 282.9M1228.4 276.9L1220.4 282.9" stroke-width="1.04"/><rect x="1236.7" y="263.7" width="4" height="6" stroke-width="0.9"/><path d="M1236.7 263.7L1240.7 269.7M1240.7 263.7L1236.7 269.7" stroke-width="0.72"/><rect x="1263.2" y="269.3" width="6" height="8" stroke-width="1.3"/><path d="M1263.2 269.3L1269.2 277.3M1269.2 269.3L1263.2 277.3" stroke-width="1.04"/><rect x="1220.4" y="308.4" width="8" height="6" stroke-width="1.3"/><path d="M1220.4 308.4L1228.4 314.4M1228.4 308.4L1220.4 314.4" stroke-width="1.04"/><rect x="1247.4" y="310.6" width="6" height="6" stroke-width="1.3"/><path d="M1247.4 310.6L1253.4 316.6M1253.4 310.6L1247.4 316.6" stroke-width="1.04"/><rect x="915.3" y="461.5" width="8" height="6" stroke-width="1.3"/><path d="M915.3 461.5L923.3 467.5M923.3 461.5L915.3 467.5" stroke-width="1.04"/><rect x="1178.0" y="415.9" width="8" height="6" stroke-width="1.3"/><path d="M1178.0 415.9L1186.0 421.9M1186.0 415.9L1178.0 421.9" stroke-width="1.04"/><rect x="1178.0" y="463.0" width="8" height="6" stroke-width="1.3"/><path d="M1178.0 463.0L1186.0 469.0M1186.0 463.0L1178.0 469.0" stroke-width="1.04"/><rect x="1214.3" y="407.1" width="6" height="9" stroke-width="1.3"/><path d="M1214.3 407.1L1220.3 416.1M1220.3 407.1L1214.3 416.1" stroke-width="1.04"/><rect x="1178.2" y="334.6" width="8" height="6" stroke-width="1.3"/><path d="M1178.2 334.6L1186.2 340.6M1186.2 334.6L1178.2 340.6" stroke-width="1.04"/><rect x="987.5" y="461.2" width="3" height="5.5" stroke-width="0.9"/><path d="M987.5 461.2L990.5 466.8M990.5 461.2L987.5 466.8" stroke-width="0.72"/><rect x="1050.0" y="461.2" width="3" height="5.5" stroke-width="0.9"/><path d="M1050.0 461.2L1053.0 466.8M1053.0 461.2L1050.0 466.8" stroke-width="0.72"/><rect x="1112.8" y="461.2" width="3.5" height="5.5" stroke-width="0.9"/><path d="M1112.8 461.2L1116.2 466.8M1116.2 461.2L1112.8 466.8" stroke-width="0.72"/></g>
<g fill="#78c03c" fill-opacity="0.9"><rect x="845" y="184.0" width="1.5" height="1.3"/><rect x="847.5" y="184.0" width="4.5" height="1.3"/><rect x="845" y="187.1" width="2.3" height="1.3"/><rect x="848.3" y="187.1" width="3.7" height="1.3"/><rect x="845" y="190.2" width="3.1" height="1.3"/><rect x="849.1" y="190.2" width="2.9" height="1.3"/><rect x="845" y="193.3" width="1.9" height="1.3"/><rect x="847.9" y="193.3" width="4.1" height="1.3"/><rect x="872" y="190.0" width="1.5" height="1.3"/><rect x="874.5" y="190.0" width="4.5" height="1.3"/><rect x="872" y="193.1" width="2.3" height="1.3"/><rect x="875.3" y="193.1" width="3.7" height="1.3"/><rect x="907.5" y="183.0" width="1.5" height="1.3"/><rect x="910.0" y="183.0" width="4.5" height="1.3"/><rect x="907.5" y="186.1" width="2.3" height="1.3"/><rect x="910.8" y="186.1" width="3.7" height="1.3"/><rect x="907.5" y="189.2" width="3.1" height="1.3"/><rect x="911.6" y="189.2" width="2.9" height="1.3"/><rect x="907.5" y="192.3" width="1.9" height="1.3"/><rect x="910.4" y="192.3" width="4.1" height="1.3"/><rect x="946.5" y="180.0" width="1.5" height="1.3"/><rect x="949.0" y="180.0" width="4.5" height="1.3"/><rect x="946.5" y="183.1" width="2.3" height="1.3"/><rect x="949.8" y="183.1" width="3.7" height="1.3"/><rect x="946.5" y="186.2" width="3.1" height="1.3"/><rect x="950.6" y="186.2" width="2.9" height="1.3"/><rect x="946.5" y="189.3" width="1.9" height="1.3"/><rect x="949.4" y="189.3" width="4.1" height="1.3"/><rect x="946.5" y="192.4" width="2.7" height="1.3"/><rect x="950.2" y="192.4" width="3.3" height="1.3"/><rect x="946.5" y="195.5" width="1.5" height="1.3"/><rect x="949.0" y="195.5" width="4.5" height="1.3"/><rect x="946.5" y="198.6" width="2.3" height="1.3"/><rect x="949.8" y="198.6" width="3.7" height="1.3"/><rect x="946.5" y="201.7" width="3.1" height="1.3"/><rect x="950.6" y="201.7" width="2.9" height="1.3"/><rect x="1012.5" y="180.0" width="1.5" height="1.3"/><rect x="1015.0" y="180.0" width="4.5" height="1.3"/><rect x="1012.5" y="183.1" width="2.3" height="1.3"/><rect x="1015.8" y="183.1" width="3.7" height="1.3"/><rect x="1012.5" y="186.2" width="3.1" height="1.3"/><rect x="1016.6" y="186.2" width="2.9" height="1.3"/><rect x="1012.5" y="189.3" width="1.9" height="1.3"/><rect x="1015.4" y="189.3" width="4.1" height="1.3"/><rect x="1012.5" y="192.4" width="2.7" height="1.3"/><rect x="1016.2" y="192.4" width="3.3" height="1.3"/><rect x="1012.5" y="195.5" width="1.5" height="1.3"/><rect x="1015.0" y="195.5" width="4.5" height="1.3"/><rect x="1012.5" y="198.6" width="2.3" height="1.3"/><rect x="1015.8" y="198.6" width="3.7" height="1.3"/><rect x="1012.5" y="201.7" width="3.1" height="1.3"/><rect x="1016.6" y="201.7" width="2.9" height="1.3"/><rect x="1075.5" y="180.0" width="1.5" height="1.3"/><rect x="1078.0" y="180.0" width="4.5" height="1.3"/><rect x="1075.5" y="183.1" width="2.3" height="1.3"/><rect x="1078.8" y="183.1" width="3.7" height="1.3"/><rect x="1075.5" y="186.2" width="3.1" height="1.3"/><rect x="1079.6" y="186.2" width="2.9" height="1.3"/><rect x="1075.5" y="189.3" width="1.9" height="1.3"/><rect x="1078.4" y="189.3" width="4.1" height="1.3"/><rect x="1075.5" y="192.4" width="2.7" height="1.3"/><rect x="1079.2" y="192.4" width="3.3" height="1.3"/><rect x="1075.5" y="195.5" width="1.5" height="1.3"/><rect x="1078.0" y="195.5" width="4.5" height="1.3"/><rect x="1075.5" y="198.6" width="2.3" height="1.3"/><rect x="1078.8" y="198.6" width="3.7" height="1.3"/><rect x="1075.5" y="201.7" width="3.1" height="1.3"/><rect x="1079.6" y="201.7" width="2.9" height="1.3"/><rect x="1141" y="180.0" width="1.5" height="1.3"/><rect x="1143.5" y="180.0" width="4.5" height="1.3"/><rect x="1141" y="183.1" width="2.3" height="1.3"/><rect x="1144.3" y="183.1" width="3.7" height="1.3"/><rect x="1141" y="186.2" width="3.1" height="1.3"/><rect x="1145.1" y="186.2" width="2.9" height="1.3"/><rect x="1141" y="189.3" width="1.9" height="1.3"/><rect x="1143.9" y="189.3" width="4.1" height="1.3"/><rect x="1141" y="192.4" width="2.7" height="1.3"/><rect x="1144.7" y="192.4" width="3.3" height="1.3"/><rect x="1141" y="195.5" width="1.5" height="1.3"/><rect x="1143.5" y="195.5" width="4.5" height="1.3"/><rect x="1141" y="198.6" width="2.3" height="1.3"/><rect x="1144.3" y="198.6" width="3.7" height="1.3"/><rect x="1141" y="201.7" width="3.1" height="1.3"/><rect x="1145.1" y="201.7" width="2.9" height="1.3"/><rect x="1205" y="180.0" width="1.5" height="1.3"/><rect x="1207.5" y="180.0" width="4.5" height="1.3"/><rect x="1205" y="183.1" width="2.3" height="1.3"/><rect x="1208.3" y="183.1" width="3.7" height="1.3"/><rect x="1205" y="186.2" width="3.1" height="1.3"/><rect x="1209.1" y="186.2" width="2.9" height="1.3"/><rect x="1205" y="189.3" width="1.9" height="1.3"/><rect x="1207.9" y="189.3" width="4.1" height="1.3"/><rect x="1205" y="192.4" width="2.7" height="1.3"/><rect x="1208.7" y="192.4" width="3.3" height="1.3"/><rect x="1205" y="195.5" width="1.5" height="1.3"/><rect x="1207.5" y="195.5" width="4.5" height="1.3"/><rect x="1205" y="198.6" width="2.3" height="1.3"/><rect x="1208.3" y="198.6" width="3.7" height="1.3"/><rect x="1243" y="193.0" width="1.5" height="1.3"/><rect x="1245.5" y="193.0" width="4.5" height="1.3"/><rect x="1243" y="196.1" width="2.3" height="1.3"/><rect x="1246.3" y="196.1" width="3.7" height="1.3"/><rect x="1297" y="248.0" width="1.5" height="1.3"/><rect x="1299.5" y="248.0" width="3.5" height="1.3"/><rect x="1297" y="251.1" width="2.3" height="1.3"/><rect x="1300.3" y="251.1" width="2.7" height="1.3"/><rect x="1297" y="254.2" width="3.1" height="1.3"/><rect x="1301.1" y="254.2" width="1.9" height="1.3"/><rect x="1297" y="257.3" width="1.9" height="1.3"/><rect x="1299.9" y="257.3" width="3.1" height="1.3"/><rect x="1297" y="260.4" width="2.7" height="1.3"/><rect x="1300.7" y="260.4" width="2.3" height="1.3"/><rect x="960" y="483.0" width="1.5" height="1.3"/><rect x="962.5" y="483.0" width="4.5" height="1.3"/><rect x="960" y="486.1" width="2.3" height="1.3"/><rect x="963.3" y="486.1" width="3.7" height="1.3"/><rect x="960" y="489.2" width="3.1" height="1.3"/><rect x="964.1" y="489.2" width="2.9" height="1.3"/><rect x="960" y="492.3" width="1.9" height="1.3"/><rect x="962.9" y="492.3" width="4.1" height="1.3"/><rect x="1027" y="483.0" width="1.5" height="1.3"/><rect x="1029.5" y="483.0" width="4.5" height="1.3"/><rect x="1027" y="486.1" width="2.3" height="1.3"/><rect x="1030.3" y="486.1" width="3.7" height="1.3"/><rect x="1027" y="489.2" width="3.1" height="1.3"/><rect x="1031.1" y="489.2" width="2.9" height="1.3"/><rect x="1027" y="492.3" width="1.9" height="1.3"/><rect x="1029.9" y="492.3" width="4.1" height="1.3"/><rect x="1027" y="495.4" width="2.7" height="1.3"/><rect x="1030.7" y="495.4" width="3.3" height="1.3"/><rect x="1027" y="498.5" width="1.5" height="1.3"/><rect x="1029.5" y="498.5" width="4.5" height="1.3"/><rect x="1093" y="483.0" width="1.5" height="1.3"/><rect x="1095.5" y="483.0" width="4.5" height="1.3"/><rect x="1093" y="486.1" width="2.3" height="1.3"/><rect x="1096.3" y="486.1" width="3.7" height="1.3"/><rect x="1093" y="489.2" width="3.1" height="1.3"/><rect x="1097.1" y="489.2" width="2.9" height="1.3"/><rect x="1093" y="492.3" width="1.9" height="1.3"/><rect x="1095.9" y="492.3" width="4.1" height="1.3"/><rect x="1093" y="495.4" width="2.7" height="1.3"/><rect x="1096.7" y="495.4" width="3.3" height="1.3"/><rect x="1093" y="498.5" width="1.5" height="1.3"/><rect x="1095.5" y="498.5" width="4.5" height="1.3"/><rect x="1160" y="483.0" width="1.5" height="1.3"/><rect x="1162.5" y="483.0" width="4.5" height="1.3"/><rect x="1160" y="486.1" width="2.3" height="1.3"/><rect x="1163.3" y="486.1" width="3.7" height="1.3"/><rect x="1160" y="489.2" width="3.1" height="1.3"/><rect x="1164.1" y="489.2" width="2.9" height="1.3"/><rect x="1160" y="492.3" width="1.9" height="1.3"/><rect x="1162.9" y="492.3" width="4.1" height="1.3"/><rect x="1160" y="495.4" width="2.7" height="1.3"/><rect x="1163.7" y="495.4" width="3.3" height="1.3"/><rect x="1160" y="498.5" width="1.5" height="1.3"/><rect x="1162.5" y="498.5" width="4.5" height="1.3"/><rect x="1239" y="298.0" width="1.5" height="1.3"/><rect x="1241.5" y="298.0" width="5.5" height="1.3"/><rect x="1239" y="301.1" width="2.3" height="1.3"/><rect x="1242.3" y="301.1" width="4.7" height="1.3"/><rect x="1239" y="304.2" width="3.1" height="1.3"/><rect x="1243.1" y="304.2" width="3.9" height="1.3"/><rect x="1239" y="307.3" width="1.9" height="1.3"/><rect x="1241.9" y="307.3" width="5.1" height="1.3"/><rect x="1263" y="296.0" width="1.5" height="1.3"/><rect x="1265.5" y="296.0" width="5.5" height="1.3"/><rect x="1263" y="299.1" width="2.3" height="1.3"/><rect x="1266.3" y="299.1" width="4.7" height="1.3"/><rect x="1223" y="417.0" width="1.5" height="1.3"/><rect x="1225.5" y="417.0" width="9.5" height="1.3"/><rect x="1223" y="420.1" width="2.3" height="1.3"/><rect x="1226.3" y="420.1" width="8.7" height="1.3"/><rect x="1223" y="423.2" width="3.1" height="1.3"/><rect x="1227.1" y="423.2" width="7.9" height="1.3"/><rect x="1261" y="414.0" width="1.5" height="1.3"/><rect x="1263.5" y="414.0" width="19.5" height="1.3"/><rect x="1261" y="417.1" width="2.3" height="1.3"/><rect x="1264.3" y="417.1" width="18.7" height="1.3"/><rect x="1261" y="420.2" width="3.1" height="1.3"/><rect x="1265.1" y="420.2" width="17.9" height="1.3"/><rect x="1380" y="326.0" width="1.5" height="1.3"/><rect x="1382.5" y="326.0" width="7.5" height="1.3"/></g>
</svg>
<!-- /FLOOR -->
<!-- context menu -->
<div class="menu" style="left:357px;top:113px;width:284px;height:452px"></div>
<div class="a" style="left:358px;top:114px;width:282px;height:24px;background:#cce4f7"></div>
<div class="t" style="left:363.3px;top:121.5px;font-size:10px;font-weight:bold;color:#2b3645">Etage: Erdgeschoss</div>
<div class="a" style="left:358.5px;top:139.5px;width:281.5px;height:1px;background:#d0d0d0"></div>
<div class="a" style="left:358.5px;top:240px;width:281.5px;height:24.5px;background:#cce4f7"></div>
<div class="a" style="left:358.5px;top:463.7px;width:281px;height:24px;background:#02a3f7"></div>
<svg class="a" style="left:357px;top:113px" width="290" height="455" viewBox="357 113 290 455">
<g fill="#d7d7d7"><rect x="386" y="214" width="248" height="1"/><rect x="386" y="265" width="248" height="1"/><rect x="386" y="290.5" width="248" height="1"/><rect x="386" y="413.7" width="248" height="1"/><rect x="386" y="512.5" width="248" height="1"/><rect x="386" y="538.7" width="248" height="1"/></g>
<g fill="#111"><path d="M629 300.5l3.5 3.5-3.5 3.5z"/><path d="M629 397.5l3.5 3.5-3.5 3.5z"/><path d="M629 496.5l3.5 3.5-3.5 3.5z"/><path d="M629 522.5l3.5 3.5-3.5 3.5z"/></g>
<path d="M629 472l3.5 3.5-3.5 3.5z" fill="#fff"/>
<rect x="361" y="442" width="19.5" height="19" fill="#ececec" stroke="#c9c9c9" stroke-width="1"/>
<rect x="364.5" y="445.5" width="12.5" height="12" fill="none" stroke="#666" stroke-width=".9"/>
<g fill="#fff" stroke="#666" stroke-width=".8"><rect x="363.3" y="444.3" width="2.4" height="2.4"/><rect x="375.8" y="444.3" width="2.4" height="2.4"/><rect x="363.3" y="456.3" width="2.4" height="2.4"/><rect x="375.8" y="456.3" width="2.4" height="2.4"/></g>
<text x="370.8" y="455.8" font-family="Liberation Sans" font-size="9.5" fill="#555" text-anchor="middle">A</text>
<path transform="translate(371.5 526.3) rotate(45)" d="M-1.2 -5 V5 a1.4 1.4 0 0 0 2.8 0 V-7.5 a3 3 0 0 0 -6 0 V8 a3.8 3.8 0 0 0 7.6 0 V-4" fill="none" stroke="#7a7a7a" stroke-width="1.1"/>
</svg>
<div class="mi" style="left:389.7px;top:148.5px;font-size:10.6px">Raum hinzufügen.</div>
<div class="mi" style="left:389.7px;top:172px;font-size:10.6px">Trasse hinzufügen</div>
<div class="mi" style="left:389.7px;top:196px;font-size:10.6px">Kabel hinzufügen</div>
<div class="mi" style="left:389.7px;top:223px;font-size:10.6px">Importiere aus DWG-Hintergrund...</div>
<div class="mi" style="left:389.7px;top:247px;font-size:10.6px">Raumbegrenzung aktiv</div>
<div class="mi dis" style="left:389.7px;top:273px;font-size:10.6px">Einfügen</div>
<div class="mi dis" style="left:582.5px;top:273px;font-size:10.6px">Strg+V</div>
<div class="mi" style="left:389.7px;top:299px;font-size:10.6px">Reports</div>
<div class="mi" style="left:389.7px;top:324px;font-size:10.6px">Ansicht drucken</div>
<div class="mi" style="left:389.7px;top:348px;font-size:10.6px">Verbindungsübersicht...</div>
<div class="mi dis" style="left:389.7px;top:372px;font-size:10.6px">Netzwerkplan erzeugen</div>
<div class="mi" style="left:389.7px;top:396px;font-size:10.6px">Suche enthaltene</div>
<div class="mi" style="left:389.7px;top:422.5px;font-size:10.6px">Zoom Vollbild</div>
<div class="mi" style="left:482.3px;top:422.5px;font-size:10.2px">Strg+0 (ZEHNERTASTATUR)</div>
<div class="mi" style="left:389.7px;top:446.5px;font-size:10.6px">Designmodus</div>
<div class="mi" style="left:597px;top:446.5px;font-size:10.6px">F12</div>
<div class="mi" style="left:389.7px;top:470.5px;font-size:10.6px;color:#fff">Ansicht &amp; Format</div>
<div class="mi" style="left:389.7px;top:495px;font-size:10.6px">Hintergrund</div>
<div class="mi" style="left:389.7px;top:521px;font-size:10.6px">Dokumente</div>
<div class="mi" style="left:389.7px;top:547.5px;font-size:10.6px">Eigenschaften</div>
<!-- submenu -->
<div class="menu" style="left:640.5px;top:463px;width:205px;height:226.5px"></div>
<svg class="a" style="left:640px;top:462px" width="210" height="230" viewBox="640 462 210 230">
<g fill="#d7d7d7"><rect x="668" y="488.3" width="171" height="1"/><rect x="668" y="514.7" width="171" height="1"/><rect x="668" y="588.7" width="171" height="1"/><rect x="668" y="639.7" width="171" height="1"/><rect x="668" y="666" width="171" height="1"/></g>
<path d="M649 576 l3.6 4.5 l7.2 -9.6" fill="none" stroke="#1aa0ee" stroke-width="1.6"/>
<g fill="#bbb"><path d="M834 599.5l3 3.5-3 3.5z"/><path d="M834 623.5l3 3.5-3 3.5z"/></g>
<rect x="750" y="675.5" width="85" height="2" fill="#8a8a8a"/>
<g fill="#c8c8c8"><rect x="750" y="681" width="1" height="6"/><rect x="758.5" y="683" width="1" height="3"/><rect x="767" y="683" width="1" height="3"/><rect x="775.5" y="683" width="1" height="3"/><rect x="784" y="683" width="1" height="3"/><rect x="792.5" y="683" width="1" height="3"/><rect x="801" y="683" width="1" height="3"/><rect x="809.5" y="683" width="1" height="3"/><rect x="818" y="683" width="1" height="3"/><rect x="826.5" y="683" width="1" height="3"/><rect x="834" y="681" width="1" height="6"/></g>
</svg>
<div class="mi" style="left:672px;top:471px;font-size:10.6px">Ansicht speichern</div>
<div class="mi" style="left:672px;top:497px;font-size:10.8px">Verbindungen immer sichtbar</div>
<div class="mi" style="left:672px;top:523.5px;font-size:10.6px">Maßstab festlegen...</div>
<div class="mi" style="left:672px;top:547.5px;font-size:10.6px">Ausmaß immer sichtbar</div>
<div class="mi" style="left:672px;top:572px;font-size:10.6px">Beschreibung zeigen...</div>
<div class="mi dis" style="left:672px;top:598px;font-size:10.6px">Ausrichtung</div>
<div class="mi dis" style="left:672px;top:622px;font-size:10.6px">Ausmaße</div>
<div class="mi" style="left:672px;top:648.5px;font-size:10.8px">Diagrammdaten zurücksetzen</div>
<div class="mi dis" style="left:672px;top:673.5px;font-size:10.6px">Größe ändern</div>
<!-- zoom tools -->

<svg class="a" style="left:1380px;top:615px" width="50" height="130" viewBox="1380 615 50 130">
<rect x="1387" y="622.5" width="36.5" height="117" fill="none" stroke="#1a84e6" stroke-width="1.5"/>
<g stroke="#b3b3b3" fill="none" stroke-width="2"><circle cx="1403.5" cy="639.5" r="7"/><circle cx="1403.5" cy="665.5" r="7"/><path d="M1399.5 639.5h8M1403.5 635.5v8M1399.5 665.5h8"/></g>
<g stroke="#b3b3b3" stroke-width="2.8" stroke-linecap="round"><path d="M1409.5 645.5l4.5 4.5M1409.5 671.5l4.5 4.5"/></g>
<path d="M1397.5 692v-5.5h6M1409 686.5h6v5.5M1415 697.5v5.5h-6M1403.5 703h-6v-5.5" fill="none" stroke="#b3b3b3" stroke-width="2"/>
<rect x="1395" y="710" width="22" height="21" fill="#e3341f"/>
<rect x="1397.8" y="712.8" width="16.4" height="15.4" fill="none" stroke="#fff" stroke-width="1"/>
<g fill="#e3341f" stroke="#fff" stroke-width="1"><rect x="1396.3" y="711.3" width="3" height="3"/><rect x="1412.7" y="711.3" width="3" height="3"/><rect x="1396.3" y="726.7" width="3" height="3"/><rect x="1412.7" y="726.7" width="3" height="3"/></g>
<text x="1406" y="725.5" font-family="Liberation Sans" font-size="12" fill="#fff" text-anchor="middle">A</text>
</svg>

<!-- bottom bar -->
<div class="a" style="left:33px;top:753px;width:1405px;height:30px;background:#333"></div>
<div class="t" style="left:57.2px;top:765px;font-size:10.1px;color:#e8e8e8">Diagramänderungen:</div>
<div class="a" style="left:167px;top:759px;width:83px;height:21px;background:#3e3e3e"></div>
<div class="t" style="left:184px;top:765px;font-size:10.1px;color:#e8e8e8">Abbrechen</div>
<div class="a" style="left:259px;top:759px;width:83px;height:21px;background:#e43a2f"></div>
<div class="t" style="left:277.7px;top:765px;font-size:10.1px;color:#fff"><u>S</u>peichern</div>


<svg class="a" style="left:1020px;top:752px" width="125" height="31" viewBox="1020 752 125 31">
<path d="M1031 757.6h-3v22.7h3 M1135 757.6h3v22.7h-3" fill="none" stroke="#9a9a9a" stroke-width="1.6"/>
<path d="M1039 766v12.5h21.5v-12.5" fill="none" stroke="#a5a5a5" stroke-width="1.2"/>
<path d="M1049.8 759.5v13M1045.5 768.5l4.3 4.5 4.3-4.5" fill="none" stroke="#a5a5a5" stroke-width="1.2"/>
</svg>
<div class="t" style="left:1068px;top:764.5px;font-size:9.8px;color:#cfcfcf">Hier ablegen</div>
<div class="t" style="left:1153px;top:758px;font-size:8.5px;color:#c4c4c4">Lizenziert: tripunkt GmbH (Christin)</div>
<div class="t" style="left:1153px;top:772px;font-size:8.5px;color:#c4c4c4">Datenbank: localhost\pathfinder [SQLite]</div>
<div class="t" style="left:1320px;top:758px;font-size:8.5px;color:#c4c4c4">© 2001-2022 tripunkt GmbH</div>
<div class="t" style="left:1320px;top:772px;font-size:8.1px;color:#c4c4c4">v3.8.0.126 (64 Bit)</div>

<!-- circles -->
<div class="circ" style="left:318px;top:126px"><svg style="position:absolute;left:0;top:0" width="63" height="63" viewBox="0 0 63 63"><path d="M32.5 19.5h2.7v27.3h-3.4v-22.8l-5.6 3.6v-3.3z" fill="#fff"/></svg></div>
<div class="circ" style="left:318px;top:246px">2</div>
<div class="circ" style="left:767px;top:537px">3</div>
<div class="circ" style="left:772px;top:258px">4</div>
<div class="circ" style="left:1340px;top:576px">5</div>
</body></html>
